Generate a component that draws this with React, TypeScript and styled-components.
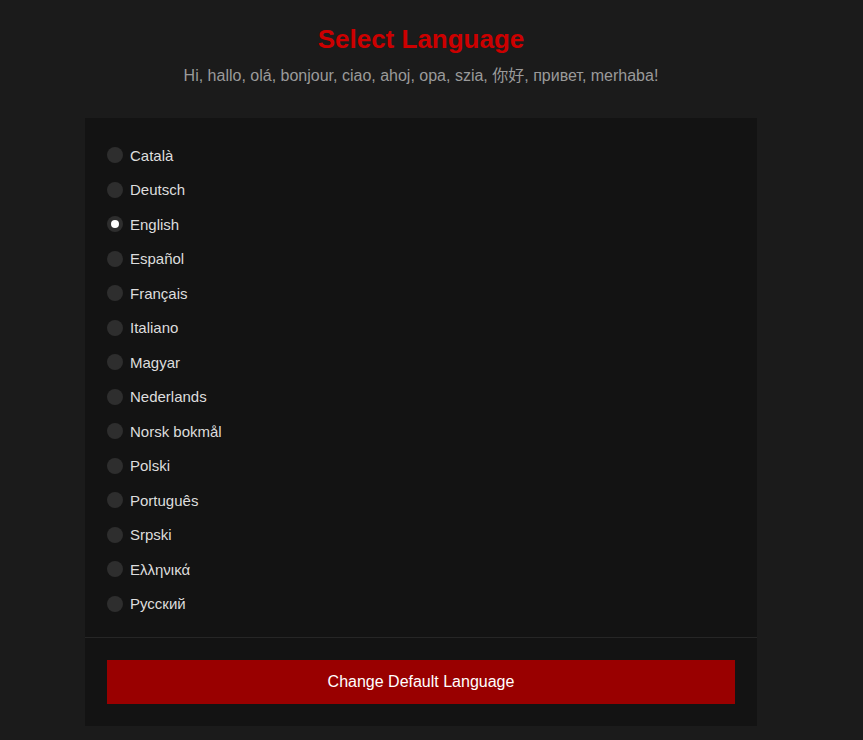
import { useState } from "react";
import styled, { createGlobalStyle } from "styled-components";

const GlobalStyle = createGlobalStyle`
  html, body {
    margin: 0;
    padding: 0;
    background: #1b1b1b;
  }
  body {
    font-family: 'Liberation Sans', Arial, 'Noto Sans CJK SC', sans-serif;
  }
`;

const languages = [
  "Català",
  "Deutsch",
  "English",
  "Español",
  "Français",
  "Italiano",
  "Magyar",
  "Nederlands",
  "Norsk bokmål",
  "Polski",
  "Português",
  "Srpski",
  "Ελληνικά",
  "Русский",
];

export default function App() {
  const [selected, setSelected] = useState("English");

  return (
    <>
      <GlobalStyle />
      <Page>
        <Header>
          <Title>Select Language</Title>
          <Subtitle>Hi, hallo, olá, bonjour, ciao, ahoj, opa, szia, 你好, привет, merhaba!</Subtitle>
        </Header>

        <Panel>
          <List>
            {languages.map((lang) => (
              <Option key={lang}>
                <HiddenInput
                  type="radio"
                  name="language"
                  checked={selected === lang}
                  onChange={() => setSelected(lang)}
                />
                <Dot $checked={selected === lang} />
                <Label>{lang}</Label>
              </Option>
            ))}
          </List>
          <Footer>
            <SubmitButton>Change Default Language</SubmitButton>
          </Footer>
        </Panel>
      </Page>
    </>
  );
}

const Page = styled.div`
  width: 842px;
  display: flex;
  flex-direction: column;
  align-items: center;
  padding-top: 24px;
  padding-bottom: 14px;
`;

const Header = styled.div`
  display: flex;
  flex-direction: column;
  align-items: center;
  margin-bottom: 32px;
`;

const Title = styled.h1`
  margin: 0;
  color: #cc0000;
  font-size: 26px;
  font-weight: 700;
  line-height: 30px;
`;

const Subtitle = styled.p`
  margin: 12px 0 0;
  color: #9a9a9a;
  font-size: 16px;
  line-height: 20px;
`;

const Panel = styled.div`
  width: 672px;
  background: #131313;
`;

const List = styled.div`
  display: flex;
  flex-direction: column;
  padding: 20px 22px 16px;
`;

const Option = styled.label`
  display: flex;
  align-items: center;
  gap: 7px;
  height: 34.5px;
  cursor: pointer;
`;

const HiddenInput = styled.input`
  position: absolute;
  opacity: 0;
  width: 0;
  height: 0;
`;

const Dot = styled.span<{ $checked: boolean }>`
  width: 16px;
  height: 16px;
  border-radius: 50%;
  background: #2e2e2e;
  display: flex;
  align-items: center;
  justify-content: center;

  &::after {
    content: "";
    width: 8px;
    height: 8px;
    border-radius: 50%;
    background: #ffffff;
    display: ${(p) => (p.$checked ? "block" : "none")};
  }
`;

const Label = styled.span`
  color: #dddddd;
  font-size: 15px;
`;

const Footer = styled.div`
  border-top: 1px solid #262626;
  padding: 22px 22px 22px;
`;

const SubmitButton = styled.button`
  width: 100%;
  height: 44px;
  border: none;
  background: #990000;
  color: #ffffff;
  font-family: 'Liberation Sans', Arial, sans-serif;
  font-size: 16px;
  cursor: pointer;
`;
